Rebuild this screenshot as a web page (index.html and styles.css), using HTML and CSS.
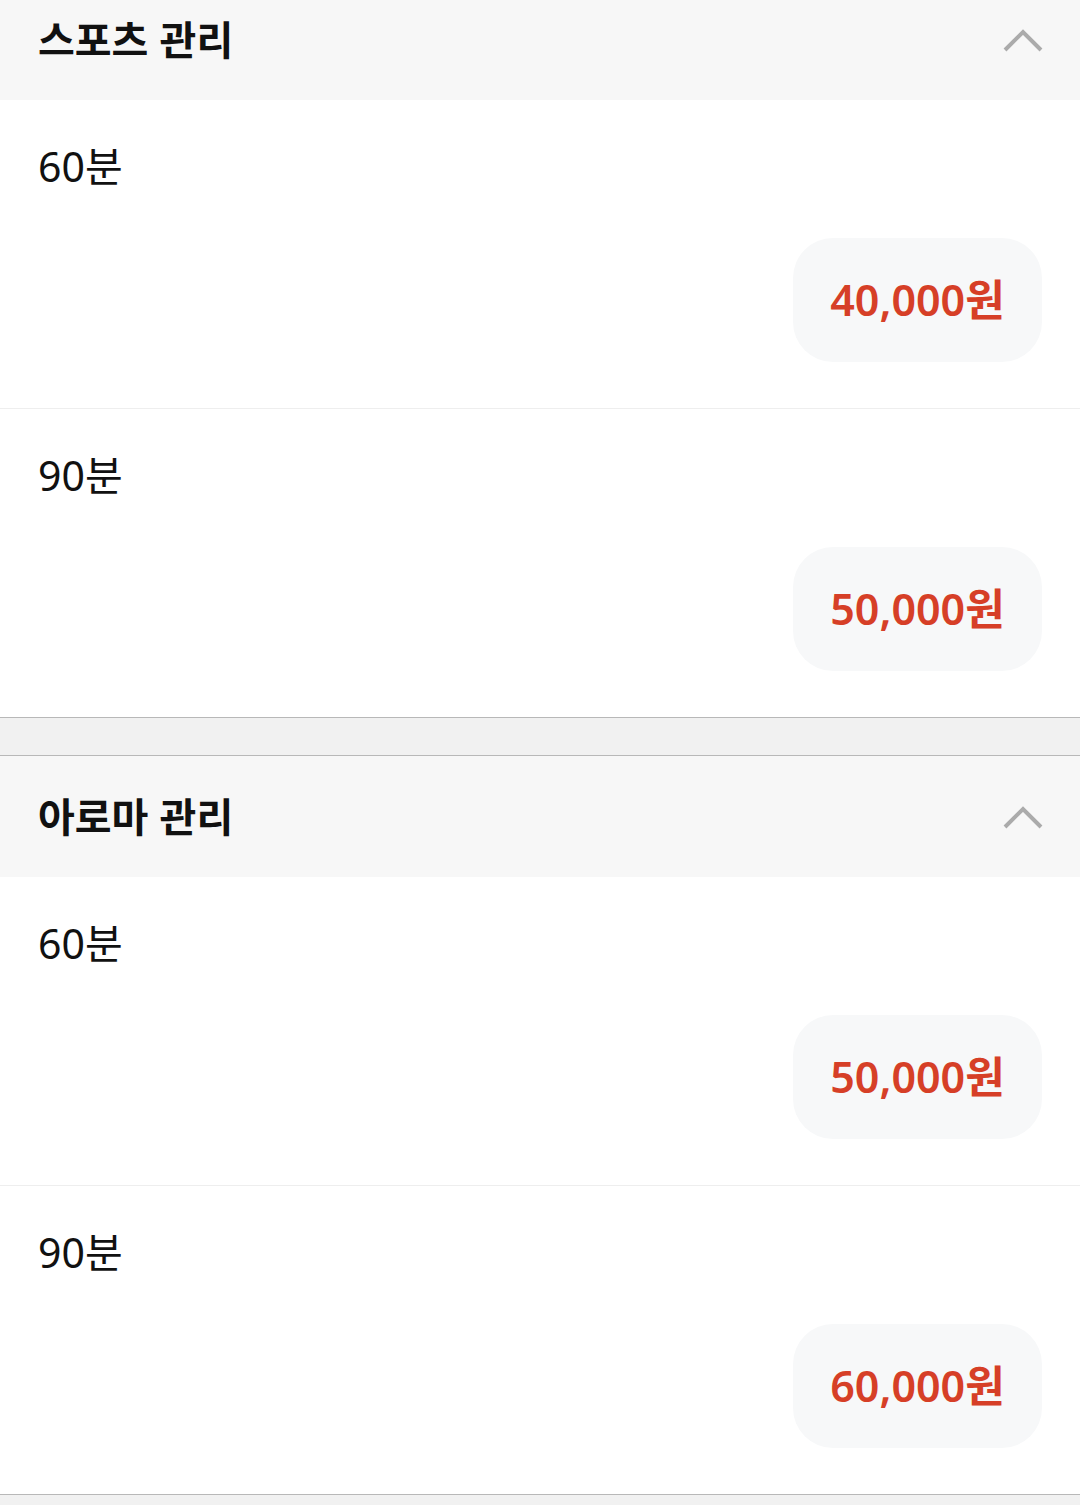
FILE: index.html
```html
<!DOCTYPE html>
<html lang="ko">

<head>
   <meta charset="UTF-8">
   <meta name="viewport" content="width=device-width, initial-scale=1.0">
   <title>관리 요금</title>
   <link rel="stylesheet" href="styles.css">
</head>

<body>
   <div class="price-list">
      <section class="group">
         <div class="group-head">
            <h2 class="group-title">스포츠 관리</h2>
            <svg class="chevron" width="40" height="24" viewBox="0 0 40 24">
               <path d="M2 21 L20 3 L38 21" fill="none" stroke="#ababab" stroke-width="4" />
            </svg>
         </div>
         <div class="item">
            <div class="item-name">60분</div>
            <div class="item-price"><span class="pill">40,000원</span></div>
         </div>
         <div class="item">
            <div class="item-name">90분</div>
            <div class="item-price"><span class="pill">50,000원</span></div>
         </div>
      </section>

      <div class="group-gap"></div>

      <section class="group">
         <div class="group-head">
            <h2 class="group-title">아로마 관리</h2>
            <svg class="chevron" width="40" height="24" viewBox="0 0 40 24">
               <path d="M2 21 L20 3 L38 21" fill="none" stroke="#ababab" stroke-width="4" />
            </svg>
         </div>
         <div class="item">
            <div class="item-name">60분</div>
            <div class="item-price"><span class="pill">50,000원</span></div>
         </div>
         <div class="item">
            <div class="item-name">90분</div>
            <div class="item-price"><span class="pill">60,000원</span></div>
         </div>
      </section>
   </div>
</body>

</html>
```

FILE: styles.css
```css
body {
   margin: 0;
   background-color: #f1f1f1;
   font-family: "Noto Sans", "Noto Sans CJK KR", sans-serif;
   color: #111;
}

.price-list {
   margin-top: -21px;
}

.group {
   background-color: #fff;
   border-bottom: 1px solid #b8b8b8;
}

.group-gap {
   height: 37px;
   border-bottom: 1px solid #b8b8b8;
}

.group-head {
   height: 121px;
   display: flex;
   align-items: center;
   justify-content: space-between;
   padding: 0 37px 0 38px;
   background-color: #f7f7f7;
}

.group-title {
   margin: -4px 0 0;
   font-family: "Noto Sans CJK KR", sans-serif;
   font-size: 40px;
   font-weight: bold;
}

.chevron {
   display: block;
   margin-top: 2px;
}

.item {
   padding: 38px 38px 46px;
   border-bottom: 1px solid #eee;
}

.item:last-child {
   border-bottom: none;
}

.item-name {
   height: 60px;
   line-height: 56px;
   font-size: 41px;
}

.item-price {
   display: flex;
   justify-content: flex-end;
   margin-top: 40px;
}

.pill {
   display: flex;
   align-items: center;
   justify-content: center;
   box-sizing: border-box;
   width: 249px;
   height: 124px;
   padding-bottom: 6px;
   border-radius: 40px;
   background-color: #f7f8f9;
   color: #d63f27;
   font-size: 43px;
   font-weight: 600;
}
```
